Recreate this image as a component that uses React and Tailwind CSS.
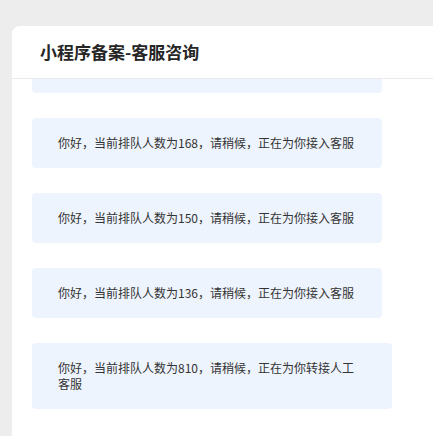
const messages = [
  "你好，当前排队人数为172，请稍候，正在为你接入客服",
  "你好，当前排队人数为168，请稍候，正在为你接入客服",
  "你好，当前排队人数为150，请稍候，正在为你接入客服",
  "你好，当前排队人数为136，请稍候，正在为你接入客服",
  "你好，当前排队人数为810，请稍候，正在为你转接人工客服",
];

export default function App() {
  return (
    <div
      className="flex h-[436px] w-[433px] overflow-hidden bg-[#ededed] pl-[12px] pt-[26px]"
      style={{ fontFamily: '"Noto Sans CJK SC", "Microsoft YaHei", sans-serif' }}
    >
      <div className="flex w-[440px] shrink-0 flex-col rounded-tl-lg bg-white">
        <div className="flex h-[53px] shrink-0 items-center border-b border-[#e9e9e9] pl-[28px]">
          <h1 className="text-[17px] font-bold text-[#262626]">小程序备案-客服咨询</h1>
        </div>
        <div className="flex-1 overflow-hidden">
          <div className="-mt-[36px] flex flex-col items-start gap-[25px] pl-[20px]">
            {messages.map((text, i) => (
              <div
                key={i}
                className="w-fit max-w-[360px] rounded bg-[#eef4fd] py-[17px] pl-[26px] pr-[28px] text-[12px] leading-[16px] text-[#333]"
              >
                {text}
              </div>
            ))}
          </div>
        </div>
      </div>
    </div>
  );
}
